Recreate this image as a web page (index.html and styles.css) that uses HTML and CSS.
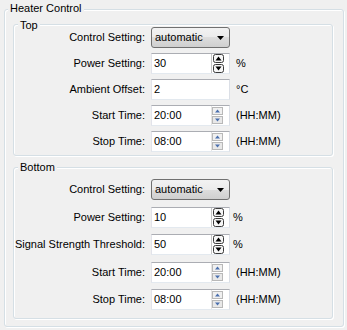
FILE: index.html
```html
<!DOCTYPE html>
<html lang="en">
<head>
    <meta charset="UTF-8">
    <meta name="viewport" content="width=device-width, initial-scale=1.0">
    <title>Heater Control</title>
    <link rel="stylesheet" href="styles.css">
</head>
<body>
    <div class="group outer">
        <span class="group-title">Heater Control</span>

        <div class="group section section-top">
            <span class="group-title">Top</span>
            <div class="form">
                <label>Control Setting:</label>
                <div class="combo">automatic
                    <svg class="arrow" width="7" height="4" viewBox="0 0 7 4"><polygon points="0,0 7,0 3.5,4" fill="#000"/></svg>
                </div>
                <span></span>

                <label>Power Setting:</label>
                <div class="field">30
                    <svg class="spin" width="13" height="19" viewBox="0 0 13 19">
                        <line x1="0.5" y1="0" x2="0.5" y2="19" stroke="#c6c6c6"/>
                        <rect x="2.5" y="0.5" width="10" height="8" rx="2" fill="#f6f6f6" stroke="#3a3a3a"/>
                        <polygon points="4.5,6.5 10.5,6.5 7.5,2.5" fill="#000"/>
                        <rect x="2.5" y="10.5" width="10" height="8" rx="2" fill="#f6f6f6" stroke="#3a3a3a"/>
                        <polygon points="4.5,12.5 10.5,12.5 7.5,16.5" fill="#000"/>
                    </svg>
                </div>
                <span class="unit">%</span>

                <label>Ambient Offset:</label>
                <div class="field">2</div>
                <span class="unit">&deg;C</span>

                <label>Start Time:</label>
                <div class="field">20:00
                    <svg class="spin" width="13" height="19" viewBox="0 0 13 19">
                        <line x1="0.5" y1="0" x2="0.5" y2="19" stroke="#e4e4e4"/>
                        <rect x="1.5" y="1.5" width="10" height="7" fill="#f0f0f0" stroke="#b8b8b8"/>
                        <polygon points="4,6.5 9,6.5 6.5,3.5" fill="#4a6fae"/>
                        <rect x="1.5" y="10.5" width="10" height="7" fill="#e8e8e8" stroke="#b8b8b8"/>
                        <polygon points="4,12.5 9,12.5 6.5,15.5" fill="#4a6fae"/>
                    </svg>
                </div>
                <span class="unit">(HH:MM)</span>

                <label>Stop Time:</label>
                <div class="field">08:00
                    <svg class="spin" width="13" height="19" viewBox="0 0 13 19">
                        <line x1="0.5" y1="0" x2="0.5" y2="19" stroke="#e4e4e4"/>
                        <rect x="1.5" y="1.5" width="10" height="7" fill="#f0f0f0" stroke="#b8b8b8"/>
                        <polygon points="4,6.5 9,6.5 6.5,3.5" fill="#4a6fae"/>
                        <rect x="1.5" y="10.5" width="10" height="7" fill="#e8e8e8" stroke="#b8b8b8"/>
                        <polygon points="4,12.5 9,12.5 6.5,15.5" fill="#4a6fae"/>
                    </svg>
                </div>
                <span class="unit">(HH:MM)</span>
            </div>
        </div>

        <div class="group section section-bottom">
            <span class="group-title">Bottom</span>
            <div class="form">
                <label>Control Setting:</label>
                <div class="combo">automatic
                    <svg class="arrow" width="7" height="4" viewBox="0 0 7 4"><polygon points="0,0 7,0 3.5,4" fill="#000"/></svg>
                </div>
                <span></span>

                <label>Power Setting:</label>
                <div class="field">10
                    <svg class="spin" width="13" height="19" viewBox="0 0 13 19">
                        <line x1="0.5" y1="0" x2="0.5" y2="19" stroke="#c6c6c6"/>
                        <rect x="2.5" y="0.5" width="10" height="8" rx="2" fill="#f6f6f6" stroke="#3a3a3a"/>
                        <polygon points="4.5,6.5 10.5,6.5 7.5,2.5" fill="#000"/>
                        <rect x="2.5" y="10.5" width="10" height="8" rx="2" fill="#f6f6f6" stroke="#3a3a3a"/>
                        <polygon points="4.5,12.5 10.5,12.5 7.5,16.5" fill="#000"/>
                    </svg>
                </div>
                <span class="unit unit-tight">%</span>

                <label>Signal Strength Threshold:</label>
                <div class="field">50
                    <svg class="spin" width="13" height="19" viewBox="0 0 13 19">
                        <line x1="0.5" y1="0" x2="0.5" y2="19" stroke="#c6c6c6"/>
                        <rect x="2.5" y="0.5" width="10" height="8" rx="2" fill="#f6f6f6" stroke="#3a3a3a"/>
                        <polygon points="4.5,6.5 10.5,6.5 7.5,2.5" fill="#000"/>
                        <rect x="2.5" y="10.5" width="10" height="8" rx="2" fill="#f6f6f6" stroke="#3a3a3a"/>
                        <polygon points="4.5,12.5 10.5,12.5 7.5,16.5" fill="#000"/>
                    </svg>
                </div>
                <span class="unit unit-tight">%</span>

                <label>Start Time:</label>
                <div class="field">20:00
                    <svg class="spin" width="13" height="19" viewBox="0 0 13 19">
                        <line x1="0.5" y1="0" x2="0.5" y2="19" stroke="#e4e4e4"/>
                        <rect x="1.5" y="1.5" width="10" height="7" fill="#f0f0f0" stroke="#b8b8b8"/>
                        <polygon points="4,6.5 9,6.5 6.5,3.5" fill="#4a6fae"/>
                        <rect x="1.5" y="10.5" width="10" height="7" fill="#e8e8e8" stroke="#b8b8b8"/>
                        <polygon points="4,12.5 9,12.5 6.5,15.5" fill="#4a6fae"/>
                    </svg>
                </div>
                <span class="unit">(HH:MM)</span>

                <label>Stop Time:</label>
                <div class="field">08:00
                    <svg class="spin" width="13" height="19" viewBox="0 0 13 19">
                        <line x1="0.5" y1="0" x2="0.5" y2="19" stroke="#e4e4e4"/>
                        <rect x="1.5" y="1.5" width="10" height="7" fill="#f0f0f0" stroke="#b8b8b8"/>
                        <polygon points="4,6.5 9,6.5 6.5,3.5" fill="#4a6fae"/>
                        <rect x="1.5" y="10.5" width="10" height="7" fill="#e8e8e8" stroke="#b8b8b8"/>
                        <polygon points="4,12.5 9,12.5 6.5,15.5" fill="#4a6fae"/>
                    </svg>
                </div>
                <span class="unit">(HH:MM)</span>
            </div>
        </div>
    </div>
</body>
</html>
```

FILE: styles.css
```css
:root {
    --bg-color: #f0f0f0;
    --group-line: #d5dfe5;
    --text-color: #000;
}

body {
    margin: 0;
    background-color: var(--bg-color);
    color: var(--text-color);
    font-family: 'Liberation Sans', Arial, sans-serif;
    font-size: 11px;
    line-height: 13px;
}

/* group boxes */
.group {
    position: relative;
    border: 1px solid var(--group-line);
    border-radius: 3px;
    box-shadow: inset 1px 1px 0 #fff, 1px 1px 0 #fff;
}

.group-title {
    position: absolute;
    left: 4px;
    top: -7px;
    padding: 0 2px;
    background-color: var(--bg-color);
}

.outer {
    margin: 9px 3px 3px 4px;
    padding: 14px 10px 7px 8px;
}

.outer > .group-title {
    left: 3px;
    top: -8px;
}

.section-top {
    padding: 2px 0 3px;
}

.section-top > .group-title {
    top: -6px;
}

.section-bottom {
    margin-top: 11px;
    padding: 11px 0 8px;
}

/* form rows */
.form {
    display: grid;
    grid-template-columns: 131px 79px auto;
    grid-auto-rows: 21px;
    column-gap: 6px;
    row-gap: 5px;
    align-items: center;
}

.section-bottom .form {
    row-gap: 6.5px;
}

.form label {
    text-align: right;
    white-space: nowrap;
}

.combo {
    box-sizing: border-box;
    height: 21px;
    display: flex;
    align-items: center;
    justify-content: space-between;
    padding: 0 5px 0 3px;
    border: 1px solid #707070;
    border-radius: 3px;
    background: linear-gradient(#f2f2f2 0%, #ebebeb 50%, #dddddd 50%, #cfcfcf 100%);
}

.field {
    box-sizing: border-box;
    height: 21px;
    display: flex;
    align-items: center;
    justify-content: space-between;
    padding: 0 5px 0 2px;
    border: 1px solid;
    border-color: #abadb3 #dbdfe6 #e3e9ef #e2e3ea;
    background-color: #fff;
}

.spin {
    display: block;
    flex-shrink: 0;
}

.unit {
    white-space: nowrap;
}

.unit-tight {
    margin-left: -3px;
}
```
